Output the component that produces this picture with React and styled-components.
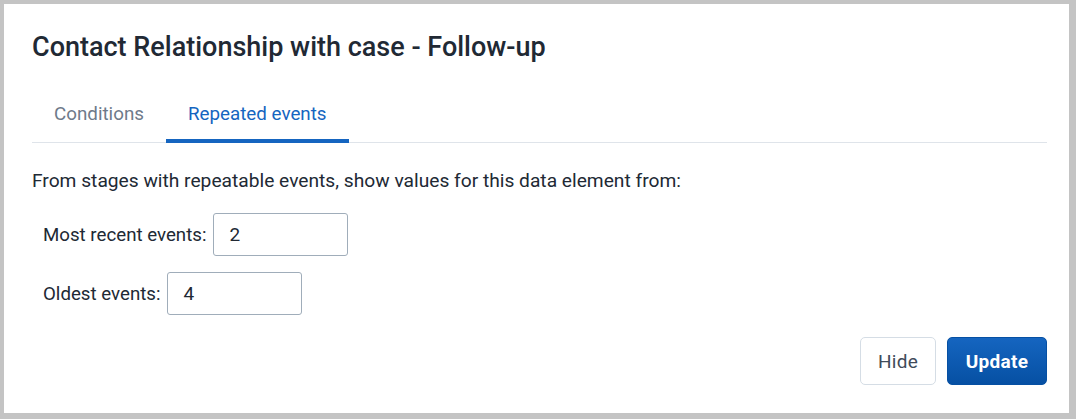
import { useState } from "react";
import styled, { createGlobalStyle } from "styled-components";

const GlobalStyle = createGlobalStyle`
  html, body {
    margin: 0;
    padding: 0;
    background: #c4c4c4;
  }
  body {
    font-family: Roboto, "Liberation Sans", sans-serif;
  }
  * {
    box-sizing: border-box;
  }
`;

const Page = styled.div`
  width: 1076px;
  height: 419px;
  padding: 4px 7px 6px 4px;
`;

const Dialog = styled.div`
  background: #ffffff;
  height: 100%;
  padding: 27px 22px 0 28px;
  display: flex;
  flex-direction: column;
`;

const Title = styled.h1`
  margin: 0;
  font-size: 27px;
  font-weight: 500;
  line-height: 32px;
  color: #212934;
`;

const TabBar = styled.div`
  display: flex;
  margin-top: 26px;
  border-bottom: 1px solid #dfe4ea;
`;

const Tab = styled.button`
  border: none;
  background: none;
  font-family: inherit;
  font-size: 18.8px;
  line-height: 24px;
  padding: 13px 22px 13px;
  margin-bottom: -1px;
  color: ${(p) => (p.active ? "#1565c0" : "#6e7a8a")};
  border-bottom: 4px solid ${(p) => (p.active ? "#1565c0" : "transparent")};
  cursor: pointer;
`;

const Intro = styled.p`
  margin: 26px 0 0;
  font-size: 19.2px;
  line-height: 24px;
  color: #212934;
`;

const Fields = styled.div`
  display: flex;
  flex-direction: column;
  gap: 16px;
  margin-top: 20px;
  padding-left: 11px;
`;

const Field = styled.label`
  display: flex;
  align-items: center;
  gap: 7px;
  font-size: 18.7px;
  color: #212934;
`;

const NumberInput = styled.input`
  width: 135px;
  height: 43px;
  border: 1px solid #a0adba;
  border-radius: 3px;
  padding: 0 15px;
  font-family: inherit;
  font-size: 19px;
  color: #212934;
  outline: none;
`;

const Actions = styled.div`
  display: flex;
  justify-content: flex-end;
  gap: 11px;
  margin-top: 22px;
`;

const Button = styled.button`
  height: 48px;
  width: ${(p) => (p.primary ? "100px" : "76px")};
  padding: 0;
  border-radius: 5px;
  font-family: inherit;
  font-size: 19px;
  font-weight: ${(p) => (p.primary ? 700 : 400)};
  letter-spacing: 0.3px;
  color: ${(p) => (p.primary ? "#ffffff" : "#404b5a")};
  background: ${(p) =>
    p.primary ? "linear-gradient(180deg, #1565c0 0%, #0650a3 100%)" : "#ffffff"};
  border: 1px solid ${(p) => (p.primary ? "#0650a3" : "#d5dde5")};
  cursor: pointer;
`;

export default function App() {
  const [tab, setTab] = useState("repeated");
  const [recent, setRecent] = useState("2");
  const [oldest, setOldest] = useState("4");

  return (
    <>
      <GlobalStyle />
      <Page>
        <Dialog>
          <Title>Contact Relationship with case - Follow-up</Title>
          <TabBar>
            <Tab active={tab === "conditions"} onClick={() => setTab("conditions")}>
              Conditions
            </Tab>
            <Tab active={tab === "repeated"} onClick={() => setTab("repeated")}>
              Repeated events
            </Tab>
          </TabBar>
          <Intro>
            From stages with repeatable events, show values for this data element from:
          </Intro>
          <Fields>
            <Field>
              Most recent events:
              <NumberInput value={recent} onChange={(e) => setRecent(e.target.value)} />
            </Field>
            <Field>
              Oldest events:
              <NumberInput value={oldest} onChange={(e) => setOldest(e.target.value)} />
            </Field>
          </Fields>
          <Actions>
            <Button>Hide</Button>
            <Button primary>Update</Button>
          </Actions>
        </Dialog>
      </Page>
    </>
  );
}
